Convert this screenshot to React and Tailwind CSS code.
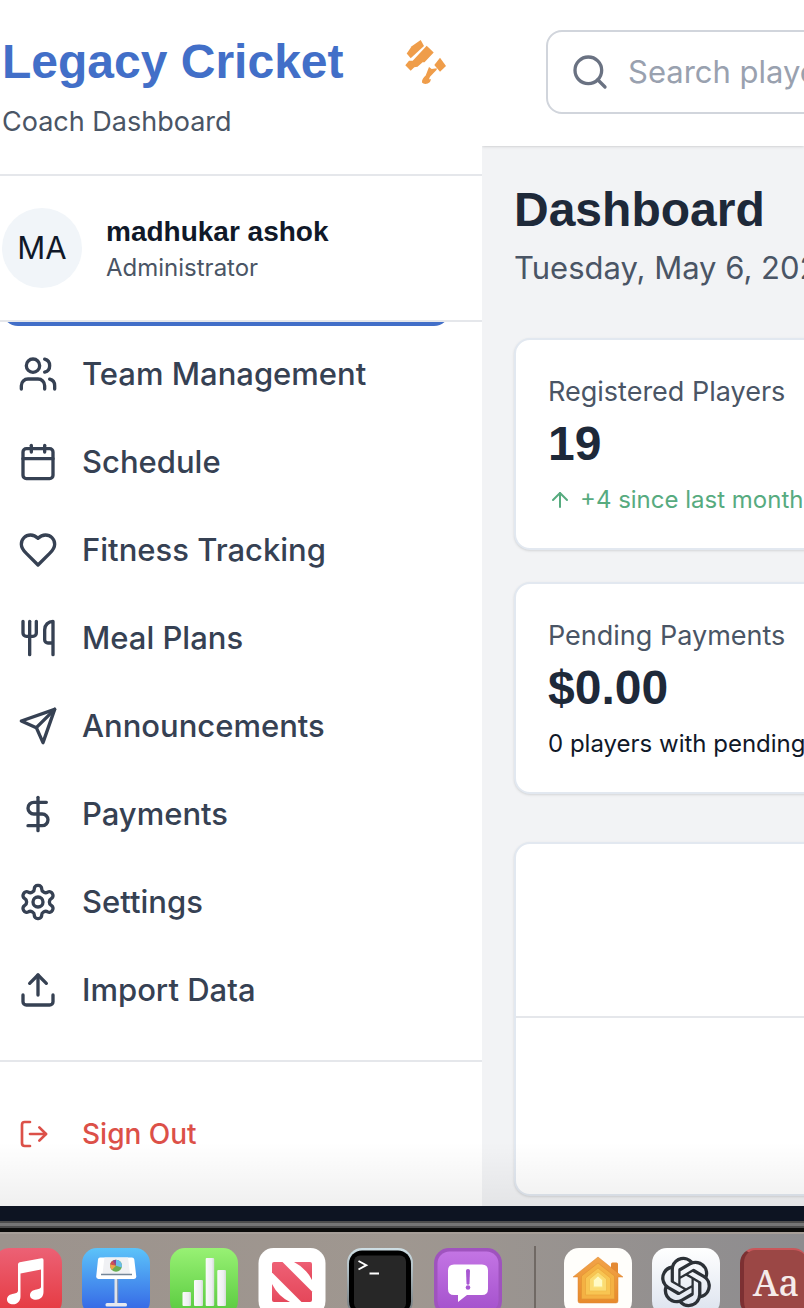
import React from "react";
import {
  ArrowUp,
  Calendar,
  DollarSign,
  LogOut,
  Search,
  Upload,
  Users,
  Utensils,
} from "lucide-react";

function Heart({ className }) {
  return (
    <svg viewBox="0 0 24 24" fill="none" stroke="currentColor" strokeWidth="2" strokeLinecap="round" strokeLinejoin="round" className={className} aria-hidden="true">
      <path d="M19 14c1.49-1.46 3-3.21 3-5.5A5.5 5.5 0 0 0 16.5 3c-1.76 0-3 .5-4.5 2-1.5-1.5-2.74-2-4.5-2A5.5 5.5 0 0 0 2 8.5c0 2.3 1.5 4.05 3 5.5l7 7Z" />
    </svg>
  );
}

function Plane({ className }) {
  return (
    <svg viewBox="0 0 24 24" fill="none" stroke="currentColor" strokeWidth="2" strokeLinecap="round" strokeLinejoin="round" className={className} aria-hidden="true">
      <path d="m22 2-7 20-4-9-9-4Z" />
      <path d="M22 2 11 13" />
    </svg>
  );
}

function Gear({ className }) {
  return (
    <svg viewBox="0 0 24 24" fill="none" stroke="currentColor" strokeWidth="2" strokeLinecap="round" strokeLinejoin="round" className={className} aria-hidden="true">
      <path d="M12.22 2h-.44a2 2 0 0 0-2 2v.18a2 2 0 0 1-1 1.73l-.43.25a2 2 0 0 1-2 0l-.15-.08a2 2 0 0 0-2.73.73l-.22.38a2 2 0 0 0 .73 2.73l.15.1a2 2 0 0 1 1 1.72v.51a2 2 0 0 1-1 1.74l-.15.09a2 2 0 0 0-.73 2.73l.22.38a2 2 0 0 0 2.73.73l.15-.08a2 2 0 0 1 2 0l.43.25a2 2 0 0 1 1 1.73V20a2 2 0 0 0 2 2h.44a2 2 0 0 0 2-2v-.18a2 2 0 0 1 1-1.73l.43-.25a2 2 0 0 1 2 0l.15.08a2 2 0 0 0 2.73-.73l.22-.39a2 2 0 0 0-.73-2.73l-.15-.08a2 2 0 0 1-1-1.74v-.5a2 2 0 0 1 1-1.74l.15-.09a2 2 0 0 0 .73-2.73l-.22-.38a2 2 0 0 0-2.73-.73l-.15.08a2 2 0 0 1-2 0l-.43-.25a2 2 0 0 1-1-1.73V4a2 2 0 0 0-2-2z" />
      <circle cx="12" cy="12" r="3" />
    </svg>
  );
}

const navItems = [
  { label: "Team Management", icon: Users },
  { label: "Schedule", icon: Calendar },
  { label: "Fitness Tracking", icon: Heart },
  { label: "Meal Plans", icon: Utensils },
  { label: "Announcements", icon: Plane },
  { label: "Payments", icon: DollarSign },
  { label: "Settings", icon: Gear },
  { label: "Import Data", icon: Upload },
];

function CricketLogo() {
  return (
    <svg viewBox="0 0 48 48" className="size-12 shrink-0 fill-[#ef9d4a]" aria-hidden="true">
      <path d="M18.700 2 22 8 8.700 20.300 4.700 15.500 9.700 8.200Z" />
      <path d="M24.700 7.800 31.700 14.500 22.500 24.300 20.500 24.300 19.500 25.300 15.500 28.800 12.300 29.300 8.700 32.700 3.300 27.300 7 22.700 10.700 22.700Z" />
      <path d="M38 19.700 44 28 38 33.700 32.300 27Z" />
      <path d="M27 29 29.700 31 34.700 30.300 34.700 31.700 28 38.700 27 41.300 29 41.300 28 44C25.500 46.500 21.500 46.500 20 44.500 19.700 42 21.500 39 23.700 37.500Z" />
    </svg>
  );
}

function Sidebar() {
  return (
    <aside className="flex w-[482px] shrink-0 flex-col bg-white">
      <div className="border-b-2 border-gray-200 pt-8 pr-8 pb-8 pl-0.5">
        <div className="flex items-center justify-between">
          <div className="font-['Liberation_Sans',sans-serif] text-5xl leading-[60px] font-bold whitespace-nowrap text-[#426fc8]">
            Legacy Cricket
          </div>
          <CricketLogo />
        </div>
        <p className="mt-2.5 text-[27px] leading-10 text-gray-600">Coach Dashboard</p>
      </div>

      <div className="flex items-center gap-6 border-b-2 border-gray-200 py-8 pr-8 pl-0.5">
        <div className="flex size-20 shrink-0 items-center justify-center rounded-full bg-slate-100 text-[31px] text-gray-900">
          MA
        </div>
        <div>
          <div className="font-['Liberation_Sans',sans-serif] text-[28px] leading-10 font-bold text-gray-900">
            madhukar ashok
          </div>
          <div className="text-2xl leading-8 text-gray-600">Administrator</div>
        </div>
      </div>

      <nav className="flex flex-col gap-2 overflow-hidden border-b-2 border-gray-200 pr-8 pb-[30px] pl-0.5">
        <div className="-mt-19 h-20 rounded-2xl bg-[#426fc8]" />
        {navItems.map(({ label, icon: Icon }) => (
          <a key={label} href="#" className="flex h-20 items-center gap-6 rounded-2xl px-4 text-[31px] font-medium whitespace-nowrap text-gray-700">
            <Icon className="size-10 shrink-0" />
            {label}
          </a>
        ))}
      </nav>

      <div className="py-8 pr-8 pl-0.5">
        <button type="button" className="flex h-20 w-full items-center gap-8 rounded-2xl px-4 text-[28px] font-medium text-[#dc5048]">
          <LogOut className="size-8 shrink-0" />
          Sign Out
        </button>
      </div>
    </aside>
  );
}

const cardClass = "min-w-[600px] rounded-2xl border-2 border-slate-200 bg-white shadow-sm";

function StatCard({ title, value, children }) {
  return (
    <section className={cardClass + " p-8"}>
      <h2 className="text-[27px] leading-10 whitespace-nowrap text-gray-600">{title}</h2>
      <p className="font-['Liberation_Sans',sans-serif] text-5xl leading-16 font-bold text-gray-800">{value}</p>
      <div className="mt-2 flex items-center text-2xl leading-8 whitespace-nowrap">{children}</div>
    </section>
  );
}

function Main() {
  return (
    <div className="min-w-0 flex-1 overflow-hidden bg-[#f2f3f5]">
      <header className="flex bg-white px-16 pt-[30px] pb-8 shadow-sm">
        <label className="flex h-[84px] min-w-[480px] items-center gap-[18px] rounded-2xl border-2 border-gray-300 px-[22px]">
          <Search className="size-10 shrink-0 text-gray-500" />
          <input
            type="text"
            aria-label="Search players"
            placeholder="Search players..."
            className="w-full bg-transparent text-[31px] outline-none placeholder:text-gray-400"
          />
        </label>
      </header>

      <main className="px-8 pt-8 pb-2.5">
        <h1 className="font-['Liberation_Sans',sans-serif] text-5xl leading-16 font-bold text-gray-800">Dashboard</h1>
        <p className="mt-1 text-[31px] leading-11 whitespace-nowrap text-gray-600">Tuesday, May 6, 2025</p>

        <div className="mt-12 flex flex-col gap-8">
          <StatCard title="Registered Players" value="19">
            <ArrowUp className="mr-1 size-6 shrink-0 text-[#57ab7f]" />
            <span className="ml-1 text-[#57ab7f]">+4 since last month</span>
          </StatCard>
          <StatCard title="Pending Payments" value="$0.00">
            <span className="text-gray-900">0 players with pending</span>
          </StatCard>
        </div>

        <section className={cardClass + " mt-12"}>
          <div className="h-[174px] border-b-2 border-gray-200" />
          <div className="h-[176px]" />
        </section>
      </main>
    </div>
  );
}

function MusicApp() {
  return (
    <svg viewBox="0 0 68 68" className="size-17 shrink-0" aria-hidden="true">
      <defs>
        <linearGradient id="music" x2="0" y2="1">
          <stop stopColor="#ec6175" />
          <stop offset="1" stopColor="#e5383e" />
        </linearGradient>
      </defs>
      <rect width="68" height="68" rx="15" fill="url(#music)" />
      <path fill="#fff" d="M24 16.500Q24 14.700 25.700 14.300L47.600 10.300Q49.500 10 49.500 12V44C49.500 49 46 51.700 42 51.700 38.500 51.700 36 50 36 47.200 36 43.500 39 42 42.500 41.400 45.500 41 47 40.500 47 38.500V21.500L26.500 25.500V48.500C26.500 53 23.500 56.300 19 56.300 15.500 56.300 13 54.300 13 51.500 13 47.800 16 46.300 19.500 45.700 22.500 45.200 24 44.700 24 42.500Z" />
    </svg>
  );
}

function KeynoteApp() {
  return (
    <svg viewBox="0 0 68 68" className="size-17 shrink-0" aria-hidden="true">
      <defs>
        <linearGradient id="keynote" x2="0" y2="1">
          <stop stopColor="#5cc3f9" />
          <stop offset="1" stopColor="#3260e4" />
        </linearGradient>
      </defs>
      <rect width="68" height="68" rx="15" fill="url(#keynote)" />
      <path fill="#dfe3ea" d="M32.500 30h3.500v26h-3.500Z" />
      <path fill="#8e9bb5" d="M35 30h1.200v26H35Z" />
      <rect x="23.500" y="55" width="21.500" height="3.500" rx="1.500" fill="#e6e9ef" />
      <path fill="#fff" d="M18 9.500H50Q52 9.500 52.300 11.500L54.300 28.500Q54.500 31 52 31H16.500Q14 31 14.200 28.500L16 11.500Q16.200 9.500 18 9.500Z" />
      <path fill="#f0f1f4" d="M22.500 9.500H46L48 26H20.500Z" />
      <path stroke="#758698" strokeWidth="1.500" d="M19 26.500H50" />
      <circle cx="34" cy="17.700" r="6" fill="#69ae52" />
      <path fill="#6abde9" d="M34 17.700V11.700A6 6 0 0 1 39.700 19.500Z" />
      <path fill="#8d4390" d="M34 17.700 30.500 12.800A6 6 0 0 1 34 11.700Z" />
      <path fill="#d34b54" d="M34 17.700 28.100 16.500A6 6 0 0 1 30.500 12.800Z" />
      <path fill="#efa54a" d="M34 17.700 29.800 22A6 6 0 0 1 28.100 16.500Z" />
    </svg>
  );
}

function NumbersApp() {
  return (
    <svg viewBox="0 0 68 68" className="size-17 shrink-0" aria-hidden="true">
      <defs>
        <linearGradient id="numbers" x2="0" y2="1">
          <stop stopColor="#98f174" />
          <stop offset="1" stopColor="#57c93d" />
        </linearGradient>
        <linearGradient id="bars">
          <stop stopColor="#fafafa" />
          <stop offset=".7" stopColor="#eceff0" />
          <stop offset="1" stopColor="#d4dbd5" />
        </linearGradient>
      </defs>
      <rect width="68" height="68" rx="15" fill="url(#numbers)" />
      <g fill="url(#bars)">
        <rect x="12.500" y="44" width="8.500" height="14" rx="1" />
        <rect x="24" y="32" width="9" height="26" rx="1" />
        <rect x="35.700" y="10" width="8.500" height="48" rx="1" />
        <rect x="47.300" y="22" width="8.700" height="36" rx="1" />
      </g>
    </svg>
  );
}

function NewsApp() {
  return (
    <svg viewBox="0 0 68 68" className="size-17 shrink-0" aria-hidden="true">
      <defs>
        <linearGradient id="news" x2="0" y2="1">
          <stop stopColor="#ee6075" />
          <stop offset="1" stopColor="#e5475a" />
        </linearGradient>
      </defs>
      <rect x=".500" width="67" height="68" rx="15" fill="#fff" />
      <g fill="url(#news)">
        <path d="M16 14H24.500L54 43.500V52Q54 54 52 54H43.500L14 24.500V16Q14 14 16 14Z" />
        <path d="M36 14H52Q54 14 54 16V32Q48 20 36 14Z" />
        <path d="M14 36V52Q14 54 16 54H32Q20 48 14 36Z" />
      </g>
    </svg>
  );
}

function TerminalApp() {
  return (
    <svg viewBox="0 0 68 68" className="size-17 shrink-0" aria-hidden="true">
      <defs>
        <linearGradient id="rim" x2="0" y2="1">
          <stop stopColor="#cfdfe5" />
          <stop offset="1" stopColor="#6d7477" />
        </linearGradient>
      </defs>
      <rect x="1" width="66" height="68" rx="15" fill="url(#rim)" />
      <rect x="3" y="2.500" width="62" height="64" rx="13" fill="#000" />
      <rect x="8" y="7.500" width="52" height="54" rx="6" fill="#272727" />
      <path fill="none" stroke="#fff" strokeWidth="1.900" d="M12.500 13 20.300 17.200 12.500 21.500M23.500 25.500H33" />
    </svg>
  );
}

function FeedbackApp() {
  return (
    <svg viewBox="0 0 68 68" className="size-17 shrink-0" aria-hidden="true">
      <defs>
        <linearGradient id="feedback" x2="0" y2="1">
          <stop stopColor="#c374e4" />
          <stop offset="1" stopColor="#a451cc" />
        </linearGradient>
      </defs>
      <rect width="68" height="68" rx="15" fill="#9f53be" />
      <rect x="3.500" y="3.500" width="61" height="61" rx="12" fill="url(#feedback)" />
      <path fill="#fff" d="M20 16.500H48Q54 16.500 54 22.500V41Q54 47 48 47H33L24 54V47H20Q14 47 14 41V22.500Q14 16.500 20 16.500Z" />
      <path fill="#a856d2" d="M32 22.500Q32 21 34 21T36 22.500L35.500 35.500Q35.300 36.800 34 36.800T32.500 35.500Z" />
      <circle cx="34" cy="39.500" r="2.300" fill="#a856d2" />
    </svg>
  );
}

function HomeApp() {
  return (
    <svg viewBox="0 0 68 68" className="size-17 shrink-0" aria-hidden="true">
      <defs>
        <linearGradient id="house" x2="0" y2="1">
          <stop stopColor="#f2a448" />
          <stop offset="1" stopColor="#e78a2c" />
        </linearGradient>
      </defs>
      <rect width="68" height="68" rx="15" fill="#fffefb" />
      <path fill="#e48a33" d="M47 16Q47 14.500 48.500 14.500H52.500Q54 14.500 54 16V26H47Z" />
      <path fill="url(#house)" stroke="#dc8330" strokeWidth=".500" d="M34 9 59 29H54V53Q54 55 52 55H16Q14 55 14 53V29H9Z" />
      <path fill="#f4b143" stroke="#e29333" strokeWidth=".700" d="M34 15 50.500 28V51H17.500V28Z" />
      <path fill="#f8c552" stroke="#eaa53b" strokeWidth=".700" d="M34 20 46.500 30V47H21.500V30Z" />
      <path fill="#fbdc73" stroke="#efbb4b" strokeWidth=".700" d="M34 24 42.500 31V43H25.500V31Z" />
      <path fill="#fffac5" stroke="#f9e583" d="M34 28 38.500 32V39H29.500V32Z" />
    </svg>
  );
}

function ChatApp() {
  return (
    <svg viewBox="0 0 68 68" className="size-17 shrink-0" aria-hidden="true">
      <defs>
        <linearGradient id="chat" x2="0" y2="1">
          <stop stopColor="#fff" />
          <stop offset="1" stopColor="#dbe2ee" />
        </linearGradient>
      </defs>
      <rect width="68" height="68" rx="15" fill="url(#chat)" />
      <g transform="translate(8.800 8.800) scale(2.100)">
        <path fill="#2c3137" d="M22.2819 9.8211a5.9847 5.9847 0 0 0-.5157-4.9108 6.0462 6.0462 0 0 0-6.5098-2.9A6.0651 6.0651 0 0 0 4.9807 4.1818a5.9847 5.9847 0 0 0-3.9977 2.9 6.0462 6.0462 0 0 0 .7427 7.0966 5.98 5.98 0 0 0 .511 4.9107 6.051 6.051 0 0 0 6.5146 2.9001A5.9847 5.9847 0 0 0 13.2599 24a6.0557 6.0557 0 0 0 5.7718-4.2058 5.9894 5.9894 0 0 0 3.9977-2.9001 6.0557 6.0557 0 0 0-.7475-7.0729zm-9.022 12.6081a4.4755 4.4755 0 0 1-2.8764-1.0408l.1419-.0804 4.7783-2.7582a.7948.7948 0 0 0 .3927-.6813v-6.7369l2.02 1.1686a.071.071 0 0 1 .038.052v5.5826a4.504 4.504 0 0 1-4.4945 4.4944zm-9.6607-4.1254a4.4708 4.4708 0 0 1-.5346-3.0137l.142.0852 4.783 2.7582a.7712.7712 0 0 0 .7806 0l5.8428-3.3685v2.3324a.0804.0804 0 0 1-.0332.0615L9.74 19.9502a4.4992 4.4992 0 0 1-6.1408-1.6464zM2.3408 7.8956a4.485 4.485 0 0 1 2.3655-1.9728V11.6a.7664.7664 0 0 0 .3879.6765l5.8144 3.3543-2.0201 1.1685a.0757.0757 0 0 1-.071 0l-4.8303-2.7865A4.504 4.504 0 0 1 2.3408 7.872zm16.5963 3.8558L13.1038 8.364 15.1192 7.2a.0757.0757 0 0 1 .071 0l4.8303 2.7913a4.4944 4.4944 0 0 1-.6765 8.1042v-5.6772a.79.79 0 0 0-.407-.667zm2.0107-3.0231l-.142-.0852-4.7735-2.7818a.7759.7759 0 0 0-.7854 0L9.409 9.2297V6.8974a.0662.0662 0 0 1 .0284-.0615l4.8303-2.7866a4.4992 4.4992 0 0 1 6.6802 4.66zM8.3065 12.863l-2.02-1.1638a.0804.0804 0 0 1-.038-.0567V6.0742a4.4992 4.4992 0 0 1 7.3757-3.4537l-.142.0805L8.704 5.459a.7948.7948 0 0 0-.3927.6813zm1.0976-2.3654l2.602-1.4998 2.6069 1.4998v2.9994l-2.5974 1.4997-2.6067-1.4997Z" />
      </g>
    </svg>
  );
}

function DictionaryApp() {
  return (
    <div className="flex size-17 shrink-0 items-center justify-center rounded-[15px] border-t-2 border-l-4 border-t-[#c9575b] border-l-[#7c3032] bg-[#9b4745] font-['Noto_Serif','Liberation_Serif',serif] text-4xl font-medium text-[#f5ebea]">
      Aa
    </div>
  );
}

function Dock() {
  return (
    <footer className="shrink-0">
      <div className="h-[15px] bg-[#0d1422]" />
      <div className="h-[7px] border-y-2 border-[#4c4c4c] bg-[#757575]" />
      <div className="h-1 bg-[#0b0b0a]" />
      <div className="h-[76px] overflow-hidden border-t-2 border-[#a69e98] bg-linear-to-r from-[#9c938d] via-[#9f9790] to-[#8d8c8f] pt-3.5">
        <div className="-ml-1.5 flex gap-5">
          <MusicApp />
          <KeynoteApp />
          <NumbersApp />
          <NewsApp />
          <TerminalApp />
          <FeedbackApp />
          <div className="mr-2 -mt-0.5 ml-3 w-0.5 shrink-0 bg-[#706964]" />
          <HomeApp />
          <ChatApp />
          <DictionaryApp />
        </div>
      </div>
    </footer>
  );
}

export default function App() {
  return (
    <div className="flex min-h-screen flex-col overflow-hidden font-['Inter',sans-serif]">
      <div className="relative flex flex-1">
        <Sidebar />
        <Main />
        <div className="pointer-events-none absolute inset-x-0 bottom-0 h-16 bg-linear-to-b from-transparent to-black/6" />
      </div>
      <Dock />
    </div>
  );
}
